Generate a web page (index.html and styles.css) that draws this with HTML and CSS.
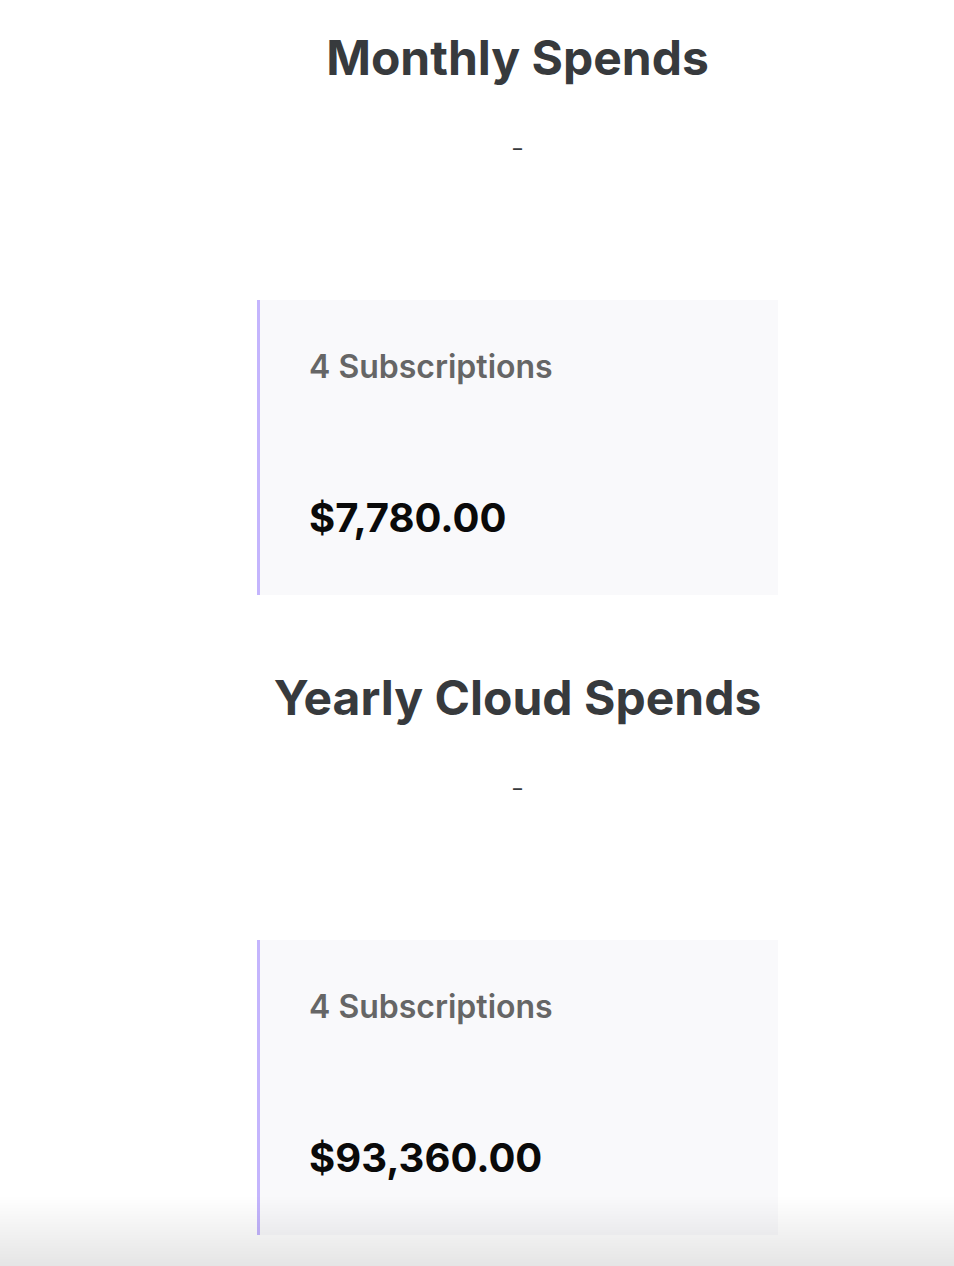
FILE: index.html
```html
<!DOCTYPE html>
<html lang="en">
<head>
<meta charset="utf-8">
<title>Spends</title>
<link rel="stylesheet" href="styles.css">
</head>
<body>
<main class="page">
  <section class="spend">
    <h2 class="spend-title">Monthly Spends</h2>
    <p class="spend-sub">–</p>
    <div class="card">
      <div class="card-label">4 Subscriptions</div>
      <div class="card-amount">$7,780.00</div>
    </div>
  </section>
  <section class="spend">
    <h2 class="spend-title">Yearly Cloud Spends</h2>
    <p class="spend-sub">–</p>
    <div class="card">
      <div class="card-label">4 Subscriptions</div>
      <div class="card-amount">$93,360.00</div>
    </div>
  </section>
</main>
<div class="fade"></div>
</body>
</html>
```

FILE: styles.css
```css
html, body {
  margin: 0;
  padding: 0;
  background: #ffffff;
}
body {
  font-family: Inter, "Noto Sans", sans-serif;
}
.page {
  width: 521px;
  margin-left: 257px;
  padding-top: 29px;
}
.spend {
  display: flex;
  flex-direction: column;
  align-items: stretch;
}
.spend + .spend {
  margin-top: 74px;
}
.spend-title {
  margin: 0;
  font-size: 48px;
  font-weight: 700;
  line-height: 58px;
  color: #373a3d;
  text-align: center;
  white-space: nowrap;
}
.spend-sub {
  margin: 52px 0 0;
  font-size: 18px;
  font-weight: 500;
  line-height: 20px;
  color: #373a3d;
  text-align: center;
  height: 161px;
}
.card {
  background: #f9f9fb;
  border-left: 3px solid #c4b5fd;
  padding: 48px 20px 0 49px;
  display: flex;
  flex-direction: column;
  gap: 108px;
  height: 295px;
  box-sizing: border-box;
}
.card-label {
  font-size: 32px;
  font-weight: 600;
  line-height: 38px;
  color: #666666;
}
.card-amount {
  font-size: 40px;
  font-weight: 700;
  line-height: 48px;
  color: #0a0a0a;
}
.fade {
  position: fixed;
  left: 0;
  right: 0;
  bottom: 0;
  height: 70px;
  background: linear-gradient(to bottom, rgba(0,0,0,0), rgba(0,0,0,0.1));
  pointer-events: none;
}
```
